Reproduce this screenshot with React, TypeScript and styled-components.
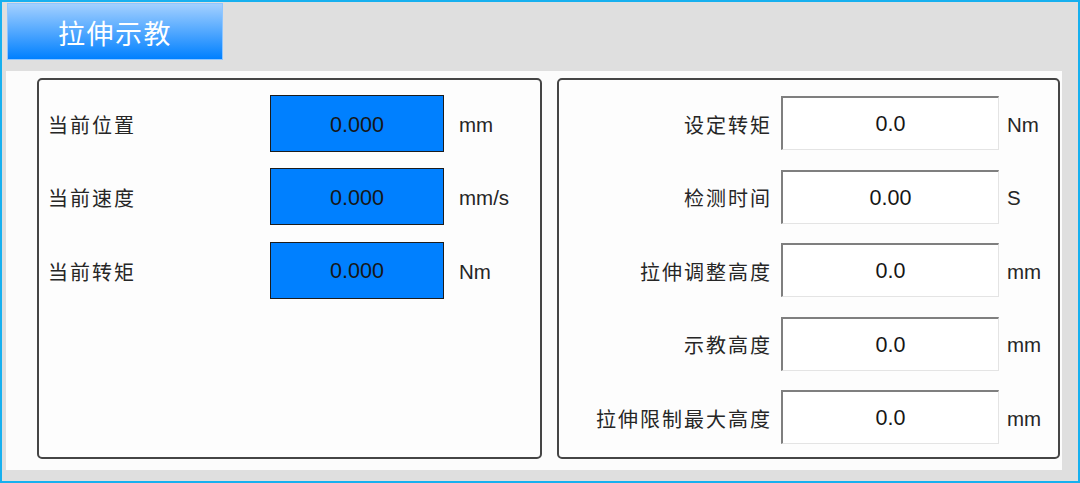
import React from "react";
import styled, { createGlobalStyle } from "styled-components";

const Global = createGlobalStyle`
  html, body { margin: 0; padding: 0; background: #dfdfdf; }
  body { font-family: "Liberation Sans", "Noto Sans CJK SC", sans-serif; }
`;

const Screen = styled.div`
  width: 1080px;
  height: 483px;
  box-sizing: border-box;
  border: 2px solid #17b0ef;
  background: #dfdfdf;
  display: flex;
  flex-direction: column;
  overflow: hidden;
`;

const TitleTab = styled.div`
  margin: 1px 0 0 5px;
  width: 216px;
  height: 57px;
  box-sizing: border-box;
  border: 1px solid #8fc6ff;
  background: linear-gradient(to bottom, #a3d0ff 0%, #4aa4ff 55%, #0080ff 100%);
  color: #ffffff;
  font-family: "Noto Sans CJK SC", sans-serif;
  font-size: 27px;
  letter-spacing: 1.5px;
  display: flex;
  align-items: center;
  justify-content: center;
  padding-top: 2px;
`;

const Content = styled.div`
  margin: 11px 0 0 4px;
  width: 1056px;
  height: 399px;
  box-sizing: border-box;
  background: #fcfcfc;
  padding: 7px 0 0 31px;
  display: flex;
  gap: 15px;
`;

const Panel = styled.div<{ $w: number }>`
  width: ${(p) => p.$w}px;
  height: 381px;
  box-sizing: border-box;
  border: 2px solid #454545;
  border-radius: 5px;
  background: #fdfdfd;
`;

const LeftGrid = styled.div`
  display: grid;
  grid-template-columns: 231px 174px 1fr;
  grid-auto-rows: 57px;
  row-gap: 16.3px;
  padding-top: 15px;
`;

const RightGrid = styled.div`
  display: grid;
  grid-template-columns: 1fr 218px 59px;
  grid-auto-rows: 54px;
  row-gap: 19.5px;
  padding-top: 16px;
`;

const Label = styled.div<{ $right?: boolean }>`
  display: flex;
  align-items: center;
  justify-content: ${(p) => (p.$right ? "flex-end" : "flex-start")};
  padding: ${(p) => (p.$right ? "2px 9px 0 0" : "2px 0 0 9px")};
  font-family: "Noto Sans CJK SC", sans-serif;
  font-size: 20px;
  letter-spacing: 2px;
  color: #262626;
  white-space: nowrap;
`;

const BlueValue = styled.div`
  box-sizing: border-box;
  border: 1px solid #1c1c1c;
  background: #0080ff;
  display: flex;
  align-items: center;
  justify-content: center;
  padding-top: 3px;
  font-size: 21.5px;
  color: #161616;
`;

const InputValue = styled.div`
  box-sizing: border-box;
  border-top: 2px solid #7f7f7f;
  border-left: 2px solid #7f7f7f;
  border-right: 1px solid #e4e4e4;
  border-bottom: 1px solid #e4e4e4;
  background: #ffffff;
  display: flex;
  align-items: center;
  justify-content: center;
  padding-top: 2px;
  font-size: 21.5px;
  color: #151515;
`;

const Unit = styled.div<{ $pad: number }>`
  display: flex;
  align-items: center;
  padding-left: ${(p) => p.$pad}px;
  padding-top: 3px;
  font-size: 20.5px;
  color: #262626;
`;

const leftRows = [
  { label: "当前位置", value: "0.000", unit: "mm" },
  { label: "当前速度", value: "0.000", unit: "mm/s" },
  { label: "当前转矩", value: "0.000", unit: "Nm" },
];

const rightRows = [
  { label: "设定转矩", value: "0.0", unit: "Nm" },
  { label: "检测时间", value: "0.00", unit: "S" },
  { label: "拉伸调整高度", value: "0.0", unit: "mm" },
  { label: "示教高度", value: "0.0", unit: "mm" },
  { label: "拉伸限制最大高度", value: "0.0", unit: "mm" },
];

export default function App() {
  return (
    <>
      <Global />
      <Screen>
        <TitleTab>拉伸示教</TitleTab>
        <Content>
          <Panel $w={505}>
            <LeftGrid>
              {leftRows.map((r) => (
                <React.Fragment key={r.label}>
                  <Label>{r.label}</Label>
                  <BlueValue>{r.value}</BlueValue>
                  <Unit $pad={15}>{r.unit}</Unit>
                </React.Fragment>
              ))}
            </LeftGrid>
          </Panel>
          <Panel $w={503}>
            <RightGrid>
              {rightRows.map((r) => (
                <React.Fragment key={r.label}>
                  <Label $right>{r.label}</Label>
                  <InputValue>{r.value}</InputValue>
                  <Unit $pad={8}>{r.unit}</Unit>
                </React.Fragment>
              ))}
            </RightGrid>
          </Panel>
        </Content>
      </Screen>
    </>
  );
}
